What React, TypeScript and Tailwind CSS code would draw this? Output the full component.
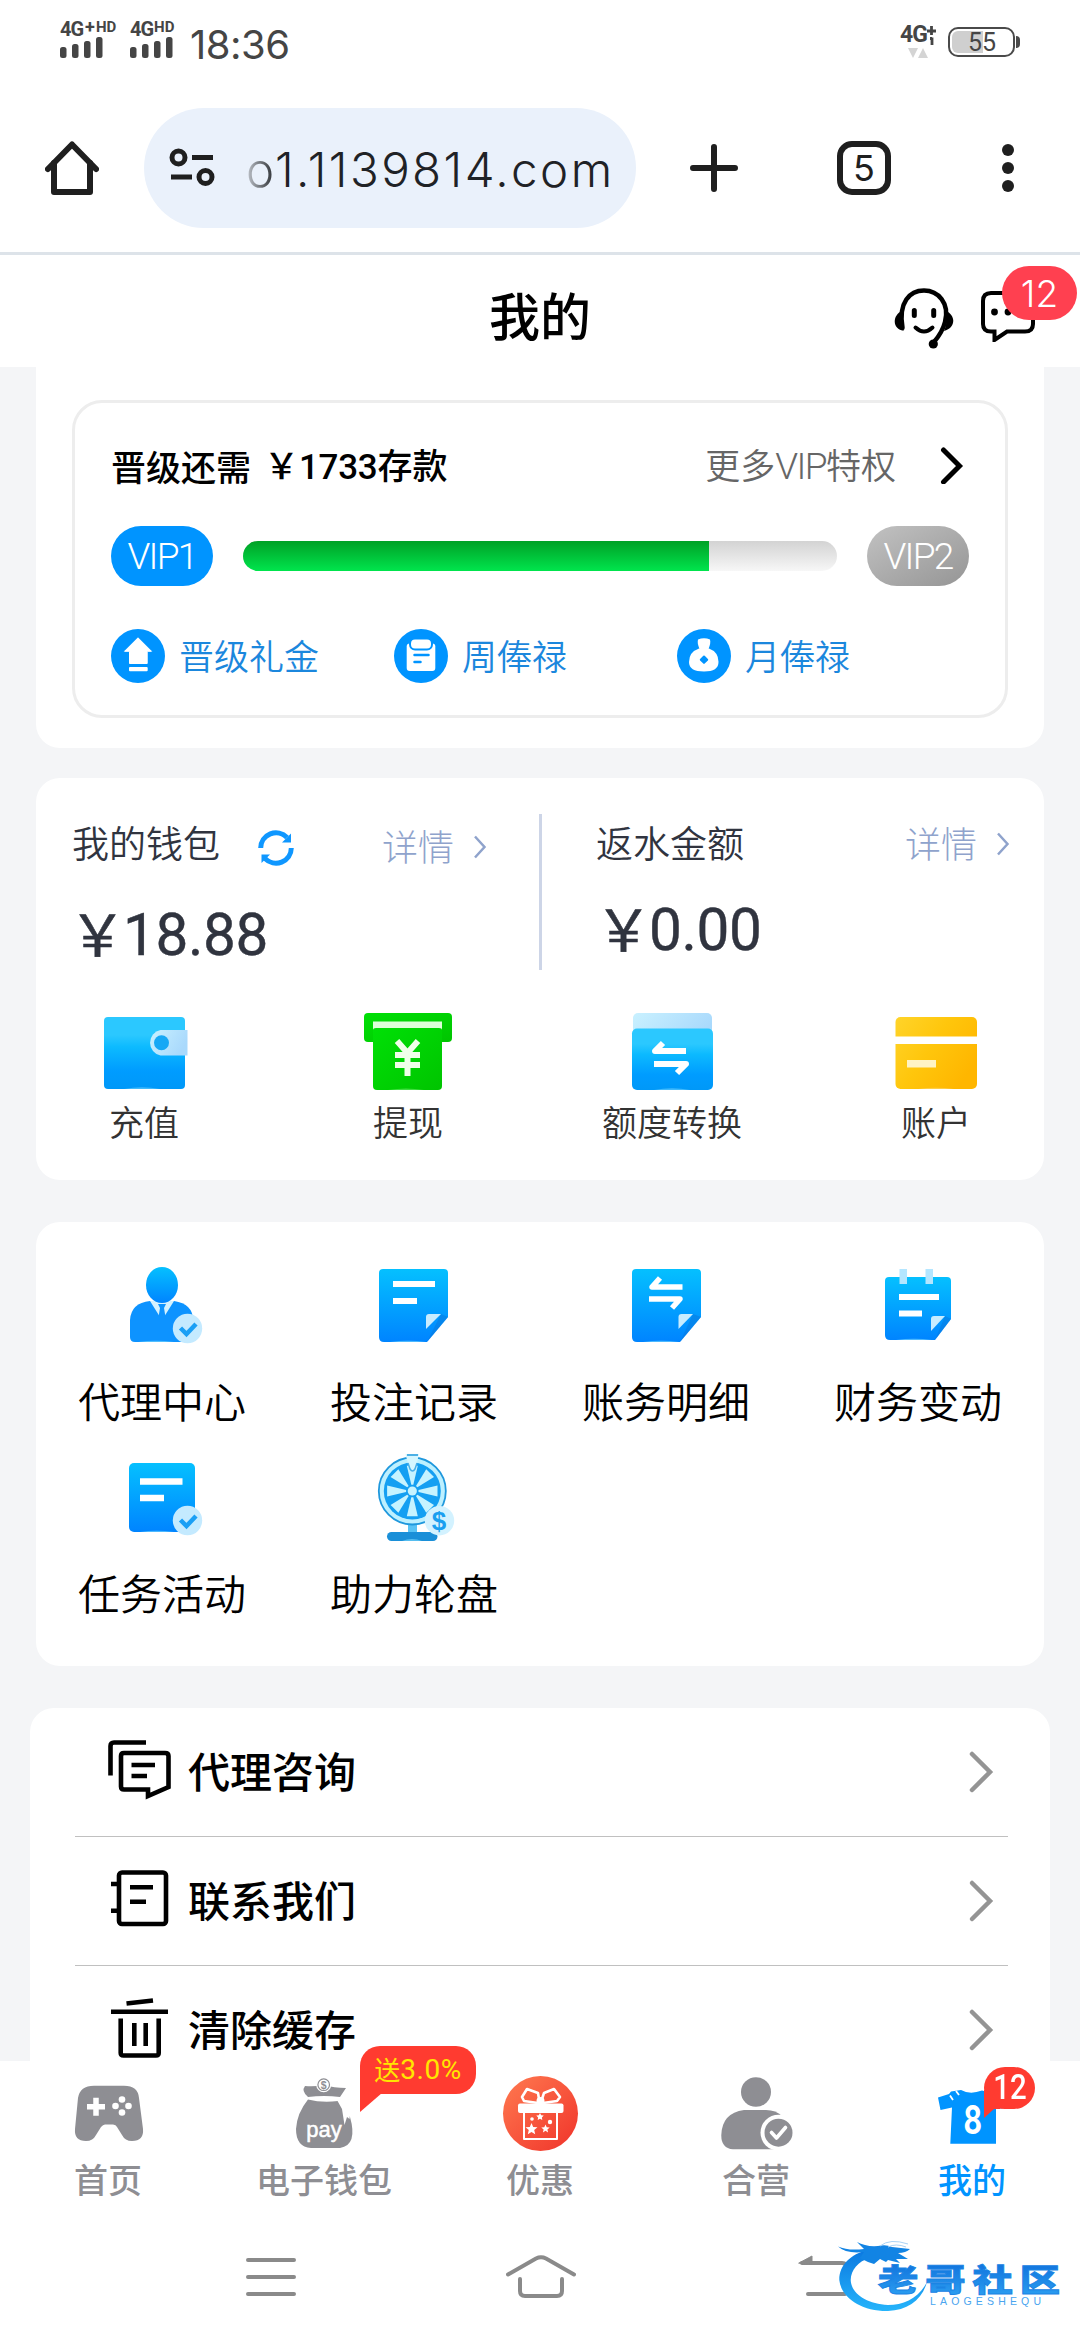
import type { ReactNode } from 'react'

interface IconItem {
  label: string
  icon: ReactNode
}

function Gradients() {
  return (
    <svg width="0" height="0" className="absolute">
      <defs>
        <linearGradient id="blue" x1="0" y1="0" x2="0" y2="1">
          <stop offset="0" stopColor="#05c0ff" />
          <stop offset="1" stopColor="#0084ff" />
        </linearGradient>
        <linearGradient id="wallet" x1="0" y1="0" x2="0" y2="1">
          <stop offset="0.25" stopColor="#2bc8ff" />
          <stop offset="0.42" stopColor="#0cbaff" />
          <stop offset="0.75" stopColor="#009cff" />
          <stop offset="1" stopColor="#0098f8" />
        </linearGradient>
        <linearGradient id="pale" x1="0" y1="0" x2="1" y2="0.4">
          <stop offset="0" stopColor="#c9f1ff" />
          <stop offset="1" stopColor="#a9d9fc" />
        </linearGradient>
        <linearGradient id="green" x1="0" y1="0" x2="1" y2="1">
          <stop offset="0" stopColor="#00e006" />
          <stop offset="1" stopColor="#00c400" />
        </linearGradient>
        <linearGradient id="gold" x1="0" y1="0" x2="1" y2="0.6">
          <stop offset="0" stopColor="#ffd42a" />
          <stop offset="0.5" stopColor="#ffc60c" />
          <stop offset="1" stopColor="#ffb600" />
        </linearGradient>
        <linearGradient id="red" x1="0" y1="0" x2="1" y2="1">
          <stop offset="0" stopColor="#ff7a50" />
          <stop offset="1" stopColor="#f0332a" />
        </linearGradient>
        <linearGradient id="logo" x1="0" y1="0" x2="0" y2="1">
          <stop offset="0" stopColor="#0b78e0" />
          <stop offset="1" stopColor="#25b4fb" />
        </linearGradient>
        <linearGradient id="logoText" x1="0" y1="0" x2="0" y2="1">
          <stop offset="0.2" stopColor="#1173dd" />
          <stop offset="0.9" stopColor="#2a9cf0" />
        </linearGradient>
      </defs>
    </svg>
  )
}

/* status bar */

function Signal() {
  return (
    <svg width="43" height="21" viewBox="0 0 43 21" fill="#454545">
      <rect x="0" y="10" width="6.5" height="11" rx="2.5" />
      <rect x="12" y="7" width="6.5" height="14" rx="2.5" />
      <rect x="24" y="4" width="6.5" height="17" rx="2.5" />
      <rect x="36" y="0" width="6.5" height="21" rx="2.5" />
    </svg>
  )
}

function StatusBar() {
  return (
    <div className="flex h-[84px] items-start pl-[60px] pr-[60px] pt-[20px] font-[Roboto,sans-serif] text-[#454545]">
      <div className="w-[70px]">
        <div className="flex h-[17px] items-start text-[20px] font-bold leading-[19px] tracking-[-1px]">
          4G<span className="ml-0.5 text-[18px] leading-[14px]">+</span>
          <span className="ml-0.5 text-[15px] leading-[14px] tracking-normal">HD</span>
        </div>
        <Signal />
      </div>
      <div className="w-[60px]">
        <div className="flex h-[17px] items-start text-[20px] font-bold leading-[19px] tracking-[-1px]">
          4G<span className="ml-px text-[15px] leading-[14px] tracking-normal">HD</span>
        </div>
        <Signal />
      </div>
      <div className="h-[50px] font-[Inter,sans-serif] text-[40px] leading-[50px] tracking-[-0.5px]">18:36</div>
      <div className="ml-auto flex items-start">
        <div className="mr-[11px] w-[37px]">
          <div className="mt-[4px] flex text-[23px] font-bold leading-[22px] tracking-[-1px]">
            4G
            <svg width="9" height="20" viewBox="0 0 9 20" fill="none" stroke="#454545" strokeWidth="2.8" className="mt-0.5">
              <path d="M0 5h9M4.500 0v9M5 11.500v7.500M3 12.500h2" />
            </svg>
          </div>
          <svg width="20" height="10" viewBox="0 0 20 10" fill="#d4d4d4" className="ml-[8px] mt-[2px]">
            <path d="M0 0h10l-5 10zM15 0l5 10H10z" />
          </svg>
        </div>
        <div className="mt-[7px] flex items-center">
          <div className="flex h-[30px] w-[67px] items-center rounded-[10px] border-[2.5px] border-[#4a4a4a] p-[2px]">
            <div className="flex h-full w-[31px] items-center rounded-l-[6px] bg-[#cfcfcf] pl-[16px] text-[25px] font-normal leading-none">
              55
            </div>
          </div>
          <div className="ml-px h-[12px] w-[4px] rounded-r-full bg-[#4a4a4a]" />
        </div>
      </div>
    </div>
  )
}

/* browser toolbar */

function Toolbar() {
  return (
    <div className="flex h-[171px] items-center border-b-[3px] border-[#dde3e9] pl-[45px]">
      <svg width="54" height="54" viewBox="0 0 54 54" fill="none" stroke="#1f1f1f" strokeWidth="6" strokeLinejoin="round" strokeLinecap="round">
        <path d="M3 28 L27 3.500 L51 28" />
        <path d="M9 22V51H45V22" />
      </svg>
      <div className="ml-[45px] flex h-[120px] w-[492px] items-center rounded-full bg-[#eaf1fb]">
        <svg width="46" height="40" viewBox="0 0 46 40" fill="none" stroke="#1f1f1f" strokeWidth="5" className="ml-[25px]">
          <circle cx="9.500" cy="9.500" r="6.500" />
          <path d="M23 9.500h21M2 29h21" />
          <circle cx="36.500" cy="29" r="6.500" />
        </svg>
        <div className="ml-[31px] mt-[3px] whitespace-nowrap font-[Inter,sans-serif] text-[47.500px] font-light leading-[60px] tracking-[2.400px] text-[#1f2226]">
          <span className="bg-linear-to-r from-[#c3c8cf] to-[#2a2d31] bg-clip-text text-transparent">o</span>1.1139814.com
        </div>
      </div>
      <svg width="48" height="48" viewBox="0 0 48 48" stroke="#1f1f1f" strokeWidth="6" strokeLinecap="round" className="ml-[54px]">
        <path d="M3 24h42M24 3v42" />
      </svg>
      <div className="ml-[99px] flex size-[54px] items-center justify-center rounded-[15px] border-6 border-[#1f1f1f] font-[Inter,sans-serif] text-[36px] leading-none text-[#1f1f1f]">
        5
      </div>
      <svg width="12" height="48" viewBox="0 0 12 48" fill="#1f1f1f" className="ml-[111px]">
        <circle cx="6" cy="6" r="6" />
        <circle cx="6" cy="24" r="6" />
        <circle cx="6" cy="42" r="6" />
      </svg>
    </div>
  )
}

function PageHeader() {
  return (
    <header className="relative flex h-[112px] items-center justify-center bg-white">
      <h1 className="pt-[6px] text-[51px] font-medium leading-none text-black">我的</h1>
      <div className="absolute left-[894px] top-[33px] flex gap-[27px]">
        <svg width="60" height="62" viewBox="0 0 60 62" fill="none" stroke="#000" strokeWidth="4.500" strokeLinecap="round">
          <path d="M8.500 40C4 14 16 2.500 30 2.500S56 15 51 34C49 42 46 47 40 54" />
          <path d="M8 23C-2 27-2 42 10 42.500C7 36 7 29 8 23Z" fill="#000" stroke="none" />
          <path d="M52 23C62 27 62 40 50 43C53 36 53 29 52 23Z" fill="#000" stroke="none" />
          <circle cx="39.300" cy="56" r="4.600" fill="#000" stroke="none" />
          <path d="M20.300 22.500v5M39.700 22.500v5" strokeWidth="5" />
          <path d="M21.500 39.500Q30 47.500 38.500 39.500" strokeWidth="4" />
        </svg>
        <svg width="54" height="54" viewBox="0 0 54 54" fill="none" stroke="#000" strokeWidth="4">
          <path d="M10 5H44Q52 5 52 13V36Q52 43.500 44 43.500H26L13.500 52V43.500H10Q2 43.500 2 36V13Q2 5 10 5Z" />
          <circle cx="13.500" cy="24" r="3.400" fill="#000" stroke="none" />
          <circle cx="27" cy="24" r="3.400" fill="#000" stroke="none" />
          <circle cx="40" cy="24" r="3.400" fill="#000" stroke="none" />
        </svg>
      </div>
      <div className="absolute left-[1002px] top-[11px] flex h-[54px] w-[75px] items-center justify-center rounded-full bg-[#ff4050] font-[Inter,sans-serif] text-[37px] font-light leading-none text-white">
        12
      </div>
    </header>
  )
}

/* vip progress */

const PERKS: IconItem[] = [
  {
    label: '晋级礼金',
    icon: (
      <>
        <path d="M27 8.800L40.500 22.300H36.200V34.500H18.500V22.300H13.500Z" fill="#fff" stroke="#fff" strokeLinejoin="round" />
        <rect x="18" y="38" width="18.700" height="4.200" rx="1" fill="#fff" />
      </>
    ),
  },
  {
    label: '周俸禄',
    icon: (
      <>
        <rect x="12.700" y="14.500" width="28.600" height="27.500" rx="3" fill="#fff" />
        <rect x="16" y="9.500" width="22" height="11" rx="5" fill="#fff" stroke="#0094ff" strokeWidth="2" />
        <path d="M20.500 26h14M20.500 33h6" stroke="#0094ff" strokeWidth="2.500" strokeLinecap="round" />
      </>
    ),
  },
  {
    label: '月俸禄',
    icon: (
      <>
        <path d="M21 10.500Q27 8 33 10.500Q34 14 31.500 20H22.500Q20 14 21 10.500Z" fill="#fff" />
        <path d="M22 19.500H32Q41.500 23 41.500 33Q41.500 42.500 27 42.500Q12 42.500 12 33Q12 23 22 19.500Z" fill="#fff" />
        <path d="M27 27.500L30.200 30.700L27 33.900L23.800 30.700Z" fill="#0094ff" stroke="#0094ff" strokeWidth="2" strokeLinejoin="round" />
      </>
    ),
  },
]

const PROGRESS = 78.5

function VipCard() {
  return (
    <section className="mx-9 h-[381px] rounded-b-[24px] bg-white px-9 pt-[33px]">
      <div className="h-[318px] rounded-[30px] border-3 border-[#ededed] px-9 pt-[28px]">
        <div className="flex h-[68px] items-center text-[35px] leading-none">
          <div className="font-medium text-black">晋级还需</div>
          <div className="ml-[13px] font-medium text-black">
            ￥<span className="font-[Roboto,sans-serif] tracking-[-0.3px]">1733</span>存款
          </div>
          <div className="ml-auto font-[350] text-[#666]">
            更多<span className="font-[Roboto,sans-serif] text-[37px] font-light tracking-[-1.600px]">VIP</span>特权
          </div>
          <svg width="24" height="38" viewBox="0 0 24 38" fill="none" stroke="#000" strokeWidth="5" strokeLinecap="round" className="ml-[44px] mr-[5px]">
            <path d="M3.500 4L19.500 20L3.500 36" />
          </svg>
        </div>
        <div className="mt-[27px] flex h-[60px] items-center font-[Roboto,sans-serif] text-[37px] font-light leading-none tracking-[-1.700px] text-white">
          <div className="flex h-full w-[102px] items-center justify-center rounded-full bg-[#0094ff]">VIP1</div>
          <div className="mx-[30px] h-[30px] flex-1 overflow-hidden rounded-full bg-linear-to-b from-[#d3d3d3] to-[#f7f7f7]">
            <div className="h-full bg-linear-to-b from-[#00a126] to-[#00e54d]" style={{ width: `${PROGRESS}%` }} />
          </div>
          <div className="flex h-full w-[102px] items-center justify-center rounded-full bg-linear-to-br from-[#c2c2c2] to-[#959595]">VIP2</div>
        </div>
        <div className="mt-[43px] flex h-[54px]">
          {PERKS.map((p) => (
            <div key={p.label} className="flex w-[283px] items-center gap-[14px]">
              <svg width="54" height="54" viewBox="0 0 54 54" fill="none">
                <circle cx="27" cy="27" r="27" fill="#0094ff" />
                {p.icon}
              </svg>
              <span className="pb-[3px] text-[35px] font-[350] leading-none text-[#1b87dd]">{p.label}</span>
            </div>
          ))}
        </div>
      </div>
    </section>
  )
}

/* wallet */

const ACTIONS: IconItem[] = [
  {
    label: '充值',
    icon: (
      <>
        <rect x="4" y="4" width="81" height="72" rx="4" fill="url(#wallet)" />
        <path d="M24 76Q42 72.500 60 76Z" fill="#7fdcff" opacity="0.5" />
        <path d="M87.500 17H60.500a13 13 0 0 0 0 25.500H87.500Z" fill="url(#pale)" />
        <circle cx="61.500" cy="29.700" r="7.500" fill="#16a8f5" />
      </>
    ),
  },
  {
    label: '提现',
    icon: (
      <>
        <rect width="88" height="29" rx="4" fill="url(#green)" />
        <rect x="9" y="8.500" width="69" height="10" fill="#dcffd9" />
        <path d="M9 17Q9 15 12 15H75Q78 15 78 17V73Q78 77 74 77H13Q9 77 9 73Z" fill="url(#green)" />
        <path d="M24 77Q42 74 60 77Z" fill="#7df07d" opacity="0.5" />
        <path d="M33 28L43.500 40L54 28M43.500 39V63M31 42H56M31 52H56" fill="none" stroke="#f0ffe9" strokeWidth="6" />
      </>
    ),
  },
  {
    label: '额度转换',
    icon: (
      <>
        <rect x="5" y="0" width="79" height="30" rx="5" fill="url(#pale)" />
        <rect x="4" y="15.500" width="81" height="61.500" rx="5" fill="url(#wallet)" />
        <path d="M26 77Q44 73.500 62 77Z" fill="#7fdcff" opacity="0.5" />
        <path d="M58 38H27L35 30M26 51H58L49 60" fill="none" stroke="#fff" strokeWidth="6" strokeLinejoin="round" />
      </>
    ),
  },
  {
    label: '账户',
    icon: (
      <>
        <rect x="3.500" y="4" width="81.500" height="72" rx="5" fill="url(#gold)" />
        <rect x="3" y="23.500" width="83" height="7.500" fill="#fff" />
        <rect x="15" y="47" width="29" height="7.500" fill="#fff3c4" />
        <path d="M26 76Q44 73.500 62 76Z" fill="#ffe08a" opacity="0.5" />
      </>
    ),
  },
]

function DetailLink() {
  return (
    <div className="flex items-center gap-[19px] text-[36px] font-light leading-none text-[#8fa3cc]">
      详情
      <svg width="14" height="24" viewBox="0 0 14 24" fill="none" stroke="#8fa3cc" strokeWidth="2.500" className="mt-1">
        <path d="M2 1.500L11.500 12L2 22.500" />
      </svg>
    </div>
  )
}

function Amount({ value }: { value: string }) {
  return (
    <div className="flex text-[57px] leading-[60px]">
      <span className="-mr-[3px] [-webkit-text-stroke:0.600px]">￥</span>
      <span className="font-[Roboto,sans-serif] text-[58.500px] leading-[69px] tracking-[-0.400px] [-webkit-text-stroke:0.400px]">{value}</span>
    </div>
  )
}

function WalletCard() {
  return (
    <section className="mx-9 mt-[30px] h-[402px] rounded-[24px] bg-white pt-9">
      <div className="flex h-[156px] text-[#30343f]">
        <div className="w-[503px] pl-9 pr-[52px]">
          <div className="flex h-[56px] items-center">
            <span className="text-[37px] font-[350] leading-none">我的钱包</span>
            <svg width="36" height="36" viewBox="0 0 36 36" fill="none" stroke="#0f97ff" strokeWidth="5" className="ml-[38px] mt-[12px]">
              <path d="M2.700 18A15.300 15.300 0 0 1 29 7.500" />
              <path d="M33.300 18A15.300 15.300 0 0 1 7 28.500" />
              <path d="M33 3.500V12.500H24Z" fill="#0f97ff" stroke="none" />
              <path d="M3.500 33V24.500H12Z" fill="#0f97ff" stroke="none" />
            </svg>
            <div className="ml-auto pt-[6px]">
              <DetailLink />
            </div>
          </div>
          <div className="-ml-[3px] mt-[31px]">
            <Amount value="18.88" />
          </div>
        </div>
        <div className="w-[3px] bg-[#cdd5e7]" />
        <div className="flex-1 pl-[54px] pr-[34px]">
          <div className="flex h-[56px] items-center justify-between">
            <span className="text-[37px] font-[350] leading-none">返水金额</span>
            <DetailLink />
          </div>
          <div className="-ml-[1px] mt-[26px]">
            <Amount value="0.00" />
          </div>
        </div>
      </div>
      <div className="-mx-6 mt-[43px] grid grid-cols-4">
        {ACTIONS.map((a) => (
          <div key={a.label} className="flex flex-col items-center">
            <svg width="88" height="77" viewBox="0 0 88 77">{a.icon}</svg>
            <span className="mt-[6px] text-[35px] font-[350] leading-[50px] text-[#333]">{a.label}</span>
          </div>
        ))}
      </div>
    </section>
  )
}

/* feature grid */

function CheckDot() {
  return (
    <>
      <circle cx="73.500" cy="66.500" r="14.700" fill="#c4eaff" />
      <path d="M66.500 66L72.500 72L82 62" fill="none" stroke="#1a9ff5" strokeWidth="4.500" />
    </>
  )
}

const WEDGES = [0, 45, 90, 135, 180, 225, 270, 315]

const FEATURES: IconItem[] = [
  {
    label: '代理中心',
    icon: (
      <>
        <path d="M36 39H60Q79 42 79 58V80H21Q16 80 16 75V58Q17 41 36 39Z" fill="#0d93ff" />
        <path d="M36 39H60L50 55H46Z" fill="#d5f2ff" />
        <path d="M44 42H52L50 46L51.500 55H44.500L46 46Z" fill="#0d93ff" />
        <path d="M24 80Q42 77.500 60 80Z" fill="#7fdcff" opacity="0.6" />
        <ellipse cx="48" cy="23" rx="16" ry="18" fill="url(#blue)" />
        <CheckDot />
      </>
    ),
  },
  {
    label: '投注记录',
    icon: (
      <>
        <path d="M17 7H78Q82 7 82 11V55L61 80H18Q13 80 13 75V11Q13 7 17 7Z" fill="url(#blue)" />
        <path d="M82 55L61 80L75 52Z" fill="#0a78dc" opacity="0.5" />
        <path d="M60 67V55Q60 52 63 52H75Z" fill="#c8ecff" />
        <path d="M27 22h42M27 39h24" stroke="#fff" strokeWidth="6" />
        <path d="M24 80Q42 77.500 60 80Z" fill="#7fdcff" opacity="0.6" />
      </>
    ),
  },
  {
    label: '账务明细',
    icon: (
      <>
        <path d="M18 7H79Q83 7 83 11V55L62 80H19Q14 80 14 75V11Q14 7 18 7Z" fill="url(#blue)" />
        <path d="M83 55L62 80L75 52Z" fill="#0a78dc" opacity="0.5" />
        <path d="M60.500 67V55Q60.500 52 63.500 52H75Z" fill="#c8ecff" />
        <path d="M64.500 25H34L42 16M31 37H62L54 46" fill="none" stroke="#fff" strokeWidth="5.500" strokeLinejoin="round" />
        <path d="M25 80Q43 77.500 61 80Z" fill="#7fdcff" opacity="0.6" />
      </>
    ),
  },
  {
    label: '财务变动',
    icon: (
      <>
        <path d="M19 15H77Q81 15 81 19V57L65 78H20Q15 78 15 73V19Q15 15 19 15Z" fill="url(#blue)" />
        <path d="M29.500 7h7.500v15h-7.500zM55.500 7h7.500v15h-7.500z" fill="#b4e6ff" />
        <path d="M81 57L65 78L75 54Z" fill="#0a78dc" opacity="0.5" />
        <path d="M61 69V57Q61 54 64 54H75Z" fill="#c8ecff" />
        <path d="M29 35h40M29 51.500h23" stroke="#fff" strokeWidth="6" />
        <path d="M26 78Q44 75.500 62 78Z" fill="#7fdcff" opacity="0.6" />
      </>
    ),
  },
  {
    label: '任务活动',
    icon: (
      <>
        <rect x="15" y="9" width="66" height="69" rx="5" fill="url(#blue)" />
        <path d="M26 27.500h42.500M26 44h24" stroke="#fff" strokeWidth="6.500" />
        <path d="M26 78Q42 75.500 60 78Z" fill="#7fdcff" opacity="0.6" />
        <CheckDot />
      </>
    ),
  },
  {
    label: '助力轮盘',
    icon: (
      <>
        <rect x="42" y="70" width="9" height="10" fill="#58c3f5" />
        <rect x="21" y="78" width="50.500" height="9" rx="4.500" fill="#1a8fd8" />
        <path d="M36 87Q46 83 56 87Z" fill="#7fdcff" opacity="0.6" />
        <circle cx="46.300" cy="37" r="33.500" fill="#bdf0ff" stroke="#1f98dd" strokeWidth="1.800" />
        <circle cx="46.300" cy="37" r="28.500" fill="#149ff2" />
        {WEDGES.map((deg) => (
          <path key={deg} d="M52.500 36L71.500 31.500V42.500L52.500 38Z" fill="#c6f3ff" transform={`rotate(${deg} 46.300 37)`} />
        ))}
        <circle cx="46.300" cy="37" r="4.600" fill="#c6f3ff" />
        <path d="M39.500 0H53L49.500 15Q46.500 21 43.500 15Z" fill="#d5f6ff" />
        <path d="M41 1H52" stroke="#1f98dd" strokeWidth="1.500" />
        <path d="M42 9L44 15Q46.500 19 49 15L51 9" fill="none" stroke="#49aee8" strokeWidth="1.500" />
        <circle cx="73.500" cy="66.700" r="14.700" fill="#d3f2ff" />
        <text x="73" y="76" textAnchor="middle" fontFamily="Liberation Sans" fontSize="26" fontWeight="700" fill="#1a9ff0">$</text>
      </>
    ),
  },
]

function FeatureGrid() {
  return (
    <section className="mx-9 mt-[42px] grid h-[444px] grid-cols-4 content-start rounded-[24px] bg-white pt-[40px]">
      {FEATURES.map((f) => (
        <div key={f.label} className="flex h-[192px] flex-col items-center">
          <svg width="96" height="90" viewBox="0 0 96 90">{f.icon}</svg>
          <span className="mt-[18px] text-[42px] font-[350] leading-[60px] text-black">{f.label}</span>
        </div>
      ))}
    </section>
  )
}

/* settings list */

const LINKS: IconItem[] = [
  {
    label: '代理咨询',
    icon: (
      <>
        <path d="M38 2.500H6Q2.500 2.500 2.500 6V35.500" />
        <path d="M16 13H57Q60.500 13 60.500 16V47L40 56V49.500H16Q13 49.500 13 46.500V16Q13 13 16 13Z" />
        <path d="M23.500 25H47M23.500 36H39" />
      </>
    ),
  },
  {
    label: '联系我们',
    icon: (
      <>
        <rect x="11" y="3.500" width="47" height="51.500" rx="3" />
        <path d="M3 15h8M3 41.700h8M22 18.300h23M22 32.700h16" />
      </>
    ),
  },
  {
    label: '清除缓存',
    icon: (
      <>
        <path d="M18.500 5.500L45 2.500M3 13.800H60" />
        <path d="M12.700 20.500V55Q12.700 57.500 15.500 57.500H48Q50.700 57.500 50.700 55V20.500M26.300 25V48M37.700 25V48" />
      </>
    ),
  },
]

function LinkList() {
  return (
    <section className="mx-[30px] mt-[42px] h-[400px] rounded-t-[24px] bg-white pl-[45px] pr-[42px]">
      {LINKS.map((l) => (
        <div key={l.label} className="flex h-[129px] items-center border-b border-[#c0c0c0] pb-[5px] pl-[33px] pr-[13px] last:border-b-0">
          <svg width="63" height="60" viewBox="0 0 63 60" fill="none" stroke="#000" strokeWidth="4.600">{l.icon}</svg>
          <span className="ml-[17px] text-[42px] font-medium leading-none text-black">{l.label}</span>
          <svg width="28" height="44" viewBox="0 0 28 44" fill="none" stroke="#949494" strokeWidth="4.500" strokeLinecap="round" className="ml-auto mt-[4px]">
            <path d="M5 4L23 22L5 40" />
          </svg>
        </div>
      ))}
    </section>
  )
}

/* bottom tabs */

const TABS: IconItem[] = [
  {
    label: '首页',
    icon: (
      <>
        <path d="M26 12.700H56Q70 12.700 71 25L75 56Q76 68 64 68Q57 68 54 62L49 54Q48 51.500 45 51.500H37Q35 51.500 33 54L28 62Q25 68 18 68Q6 68 7 56L10 25Q12 12.700 26 12.700Z" fill="#8e8e93" />
        <path d="M19 33.700H37M28 24.700V42.700" stroke="#fff" strokeWidth="5.500" />
        <g fill="#fff">
          <circle cx="54" cy="26.500" r="3.300" />
          <circle cx="60.500" cy="33" r="3.300" />
          <circle cx="54" cy="39.500" r="3.300" />
          <circle cx="47.500" cy="33" r="3.300" />
        </g>
      </>
    ),
  },
  {
    label: '电子钱包',
    icon: (
      <>
        <path d="M21 13Q30 14 40 12Q50 15 62 15L56 24Q40 22 24 24Q17 18 21 13Z" fill="#8e8e93" />
        <path d="M24 26.500Q38 30 54 28L66 44Q74 72 56 75H27Q12 74 12 56Q13 40 24 26.500Z" fill="#8e8e93" />
        <path d="M53 27L58 36L60.500 52L63 44L65.500 46L66 41L58 27Z" fill="#fff" />
        <circle cx="39.700" cy="11.700" r="7.500" fill="#fff" />
        <circle cx="39.700" cy="11.700" r="5.800" fill="none" stroke="#8e8e93" strokeWidth="1.200" />
        <text x="39.700" y="15.500" textAnchor="middle" fontFamily="Liberation Sans" fontSize="10.500" fontWeight="700" fill="#8e8e93">$</text>
        <text x="40" y="63.500" textAnchor="middle" fontFamily="Liberation Sans" fontSize="22" fill="#fff" stroke="#fff" strokeWidth="0.500">pay</text>
      </>
    ),
  },
  {
    label: '优惠',
    icon: (
      <>
        <circle cx="40.500" cy="40.500" r="37.500" fill="url(#red)" />
        <g fill="none" stroke="#fff" strokeWidth="2.600" strokeLinejoin="round">
          <path d="M38 30L24 28L22 24L27 16L38 20L39 26M43 30L57 28L60 24L54 16L44 20L42 26" />
          <path d="M24 40V66H57V40" strokeWidth="2" />
        </g>
        <rect x="18" y="30.500" width="45.500" height="9.500" rx="2" fill="#fff" />
        <circle cx="40.500" cy="28" r="4" fill="#fff" />
        <g fill="#fff">
          <path d="M31.500 50l1.700 4 4.300.2-3.300 2.800 1 4.200-3.700-2.300-3.700 2.300 1-4.200-3.300-2.800 4.300-.2z" />
          <path d="M45.500 51.500l1.200 2.800 3 .2-2.300 2 .7 3-2.600-1.700-2.600 1.700.7-3-2.300-2 3-.2z" />
          <path d="M40 40l1.200 2.300 2.500.3-1.800 1.800.4 2.600-2.300-1.300-2.300 1.300.4-2.600-1.800-1.800 2.500-.3z" />
          <circle cx="32" cy="46" r="1.800" />
          <circle cx="50" cy="49" r="2.200" />
        </g>
      </>
    ),
  },
  {
    label: '合营',
    icon: (
      <>
        <ellipse cx="40" cy="19" rx="15" ry="14.700" fill="#8e8e93" />
        <path d="M28 37H50Q60 37 66 43L74 60L60 76.300H17Q5 75 5.300 62Q6 40 28 37Z" fill="#8e8e93" />
        <circle cx="62.500" cy="59.700" r="18" fill="#fff" />
        <circle cx="62.500" cy="59.700" r="14" fill="#8e8e93" />
        <path d="M55.500 59.500L60.500 65L69.500 54.500" fill="none" stroke="#fff" strokeWidth="3.600" strokeLinecap="round" strokeLinejoin="round" />
      </>
    ),
  },
  {
    label: '我的',
    icon: (
      <>
        <path d="M6 24.500L17 21L19 18.500L29 17Q38 22 50 17.500L63 21L73 35L64 36L64 70.700H18.300L20 34.500L8.500 37Z" fill="#0094ff" />
        <path d="M18 22.500L21 27M24 18L27 22" stroke="#fff" strokeWidth="1.800" />
        <text x="31.500" y="60.500" textLength="18.500" lengthAdjust="spacingAndGlyphs" fontFamily="Inter" fontSize="39" fontWeight="700" fill="#fff">8</text>
      </>
    ),
  },
]

const ACTIVE_TAB = '我的'

function TabBar() {
  return (
    <nav className="relative grid h-[170px] grid-cols-5 bg-white pt-[12px]">
      {TABS.map((t) => (
        <div key={t.label} className="flex flex-col items-center">
          <svg width="80" height="80" viewBox="0 0 80 80">{t.icon}</svg>
          <span className={`mt-[6px] text-[34px] font-medium leading-[40px] ${t.label === ACTIVE_TAB ? 'text-[#0094ff]' : 'text-[#8e8e93]'}`}>
            {t.label}
          </span>
        </div>
      ))}
      <div className="absolute left-[360px] top-[-15px]">
        <div className="flex h-[48px] w-[116px] items-center justify-center rounded-[20px] rounded-bl-none bg-[#ff3b30] text-[26px] leading-none text-[#ffe600]">
          <span className="pb-[2px]">送</span>
          <span className="font-[Roboto,sans-serif] text-[28px] tracking-[0.5px]">3.0%</span>
        </div>
        <svg width="22" height="19" viewBox="0 0 22 19" fill="#ff3b30" className="-mt-px">
          <path d="M0 0H22L0 19Z" />
        </svg>
      </div>
      <div className="absolute left-[984px] top-[6px]">
        <div className="flex h-[42px] w-[51px] items-center justify-center rounded-full bg-[#ff3b30] text-white">
          <span className="scale-x-[0.84] pb-[2px] font-[Roboto,sans-serif] text-[35px] font-medium leading-none">12</span>
        </div>
        <svg width="16" height="28" viewBox="0 0 16 28" fill="#ff3b30" className="-mt-[19px]">
          <path d="M0 0H16V19H10L0 28Z" />
        </svg>
      </div>
    </nav>
  )
}

/* android navigation keys with the site watermark over them */

function SystemNav() {
  return (
    <div className="relative flex h-[109px] bg-white pl-[246px] pt-[24px]">
      <svg width="50" height="44" viewBox="0 0 50 44" stroke="#8a8a8a" strokeWidth="4" strokeLinecap="round">
        <path d="M2 5h46M2 22h46M2 39h46" />
      </svg>
      <svg width="70" height="44" viewBox="0 0 70 44" fill="none" stroke="#8a8a8a" strokeWidth="4" strokeLinecap="round" className="ml-[210px]">
        <path d="M2 19.500L30 3.500Q35 1 40 3.500L68 19.500" />
        <path d="M14 24V36Q14 41 19 41H51Q56 41 56 36V24" />
      </svg>
      <svg width="52" height="44" viewBox="0 0 52 44" fill="none" stroke="#8a8a8a" strokeWidth="4" strokeLinecap="round" className="ml-[222px]">
        <path d="M4 8H44Q49 8 49 14M47 39H10" />
        <path d="M1 8L14 1V9Z" fill="#8a8a8a" strokeWidth="1" />
      </svg>
      <svg width="236" height="84" viewBox="0 0 236 84" className="absolute left-[834px] top-[3px]">
        <path d="M34 16C16 20 5 32 5.300 46C7 64 28 77.500 54 77C74 76 88 66 93 48C85 64 70 71 54 71C32 70 17 59 16.700 46C17 36 24 27 36 24Z" fill="url(#logo)" />
        <path d="M4 12.500Q14 17 30 15L23 8Q32 13 44 12Q52 10 58 13L76 15Q72 19 64 19L74 25L62 25L66 29L54 26L52 28L46 25L40 30L34 28L26 24L30 18Q12 20 4 12.500Z" fill="#1284e4" />
        <path d="M46 12Q56 4 74 10M54 13Q62 9 72 13" fill="none" stroke="#a8d2f5" strokeWidth="1" />
        <g transform="translate(44 56.500) scale(1.3 1)">
          <text x="0" y="0" textLength="140" fontFamily="Noto Sans CJK SC, sans-serif" fontSize="31" fontWeight="900" fill="url(#logoText)" stroke="#1b84e4" strokeWidth="0.900">老哥社区</text>
        </g>
        <text x="96" y="70.500" textLength="111" fontFamily="Liberation Sans, sans-serif" fontSize="10.500" fill="#4aa5ef">LAOGESHEQU</text>
      </svg>
    </div>
  )
}

export default function App() {
  return (
    <div className="flex h-[2340px] w-[1080px] flex-col overflow-hidden bg-white font-['Noto_Sans_CJK_SC',sans-serif]">
      <Gradients />
      <StatusBar />
      <Toolbar />
      <PageHeader />
      <main className="h-[1694px] overflow-hidden bg-[#f4f5f7]">
        <VipCard />
        <WalletCard />
        <FeatureGrid />
        <LinkList />
      </main>
      <TabBar />
      <SystemNav />
    </div>
  )
}
